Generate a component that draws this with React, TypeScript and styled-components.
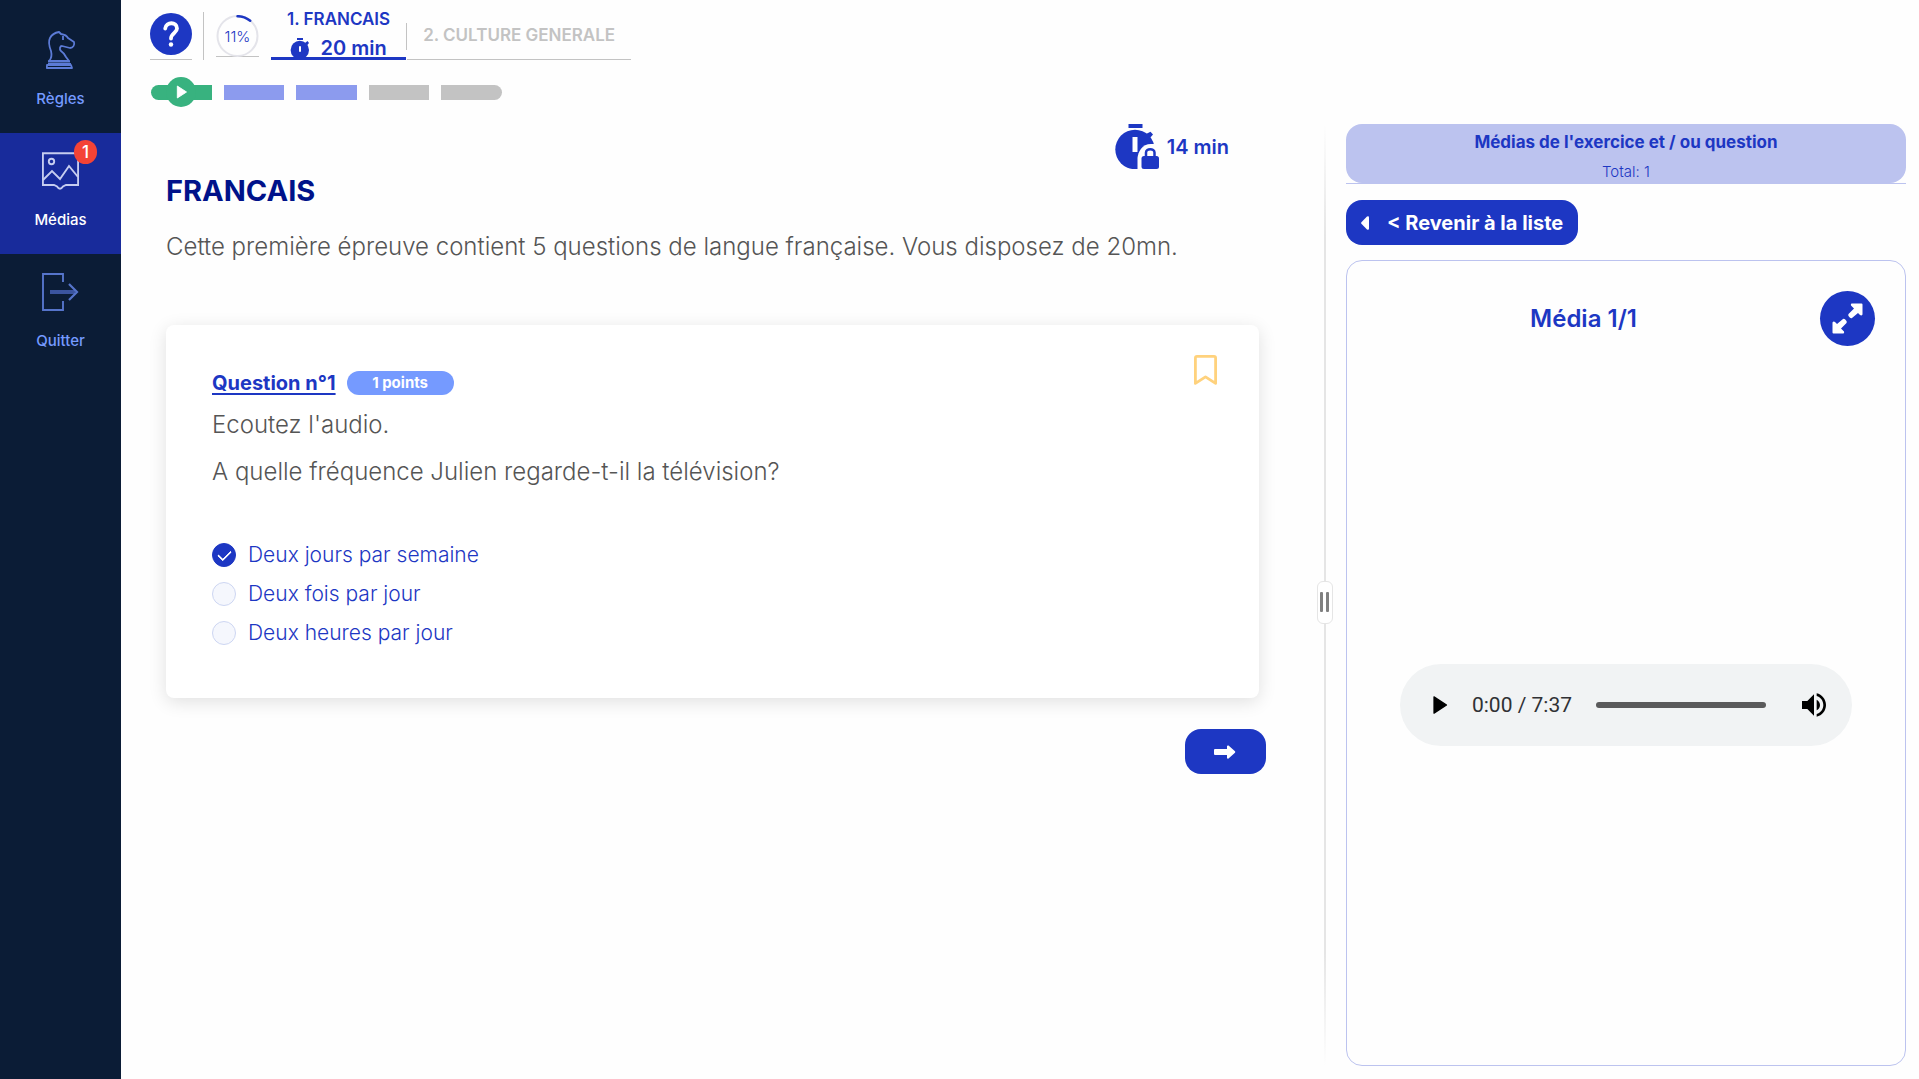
import React, { useState } from "react";
import styled, { createGlobalStyle } from "styled-components";

const blue = "#1d37c3";
const lilac = "#bcc3ef";

const GlobalStyle = createGlobalStyle`
  * { box-sizing: border-box; }
  body {
    margin: 0;
    background: #fefefe;
    color: ${blue};
    font-family: Inter, "Open Sans", sans-serif;
  }
  button { font-family: inherit; cursor: pointer; }
  h1, h2, h3, p, fieldset { margin: 0; padding: 0; border: 0; }
`;

const Page = styled.div`
  display: flex;
  min-height: 100vh;
`;

const Sidebar = styled.nav`
  display: flex;
  flex-direction: column;
  flex: 0 0 121px;
  padding-top: 12px;
  background: #0b1c36;
`;

const SideItem = styled.button<{ $active?: boolean }>`
  display: flex;
  flex-direction: column;
  align-items: center;
  gap: 20px;
  height: 121px;
  padding: 19px 0 0;
  border: 0;
  background: ${(p) => (p.$active ? "#182b9b" : "transparent")};
  color: ${(p) => (p.$active ? "#fff" : "#759aff")};
  font-size: 15px;
  font-weight: 500;
  line-height: 20px;
`;

const IconSlot = styled.span`
  position: relative;
  display: flex;
  height: 38px;
`;

const Badge = styled.span`
  position: absolute;
  top: -12px;
  right: -18px;
  width: 23px;
  height: 24px;
  border-radius: 12px;
  background: #f44336;
  color: #fff;
  font-size: 17px;
  line-height: 24px;
  text-align: center;
`;

const Main = styled.main`
  display: flex;
  flex-direction: column;
  flex: 1;
  min-width: 0;
`;

const TopBar = styled.header`
  display: flex;
  align-items: flex-end;
  height: 60px;
  padding-left: 29px;
`;

const HelpBox = styled.div`
  padding-bottom: 4px;
  border-bottom: 1px solid #c3c3c3;
`;

const RoundButton = styled.button<{ $size: number }>`
  display: flex;
  align-items: center;
  justify-content: center;
  width: ${(p) => p.$size}px;
  height: ${(p) => p.$size}px;
  padding: 0;
  border: 0;
  border-radius: 50%;
  background: ${blue};
`;

const Rule = styled.span<{ $tall?: boolean }>`
  width: 1px;
  height: ${(p) => (p.$tall ? 48 : 27)}px;
  margin: ${(p) => (p.$tall ? "0 12px 0 11px" : "0 0 10px")};
  background: #c3c3c3;
`;

const RingBox = styled.div`
  display: grid;
  height: 42px;
  margin: 0 12px 3px 0;
  place-items: center;
  background: linear-gradient(#c3c3c3, #c3c3c3) bottom / 100% 1px no-repeat;
  font-size: 15px;
  font-weight: 300;

  > * { grid-area: 1 / 1; }
`;

const Tab = styled.button<{ $active?: boolean }>`
  display: flex;
  flex-direction: column;
  align-items: center;
  gap: 9px;
  padding: ${(p) => (p.$active ? "0 16px" : "0 16px 14px")};
  border: 0;
  border-bottom: ${(p) => (p.$active ? `3px solid ${blue}` : "1px solid #c3c3c3")};
  background: none;
  color: ${(p) => (p.$active ? blue : "#c3c3c3")};
  font-size: 17px;
  font-weight: 600;
  line-height: 20px;
  white-space: nowrap;
`;

const TabTime = styled.span`
  display: flex;
  gap: 10px;
  margin-bottom: -1px;
  font-size: 20px;
`;

const Progress = styled.div`
  display: flex;
  align-items: center;
  gap: 12px;
  width: 351px;
  height: 30px;
  margin: 17px 0 17px 30px;
`;

const Segment = styled.div<{ $color: string }>`
  display: flex;
  align-items: center;
  justify-content: center;
  flex: 1;
  height: 15px;
  background: ${(p) => p.$color};

  &:first-child { border-radius: 8px 0 0 8px; }
  &:last-child { border-radius: 0 8px 8px 0; }
`;

const PlayDot = styled.span`
  display: flex;
  align-items: center;
  justify-content: center;
  flex: none;
  width: 30px;
  height: 30px;
  border-radius: 50%;
  background: #38b27f;
`;

const Workspace = styled.div`
  display: grid;
  grid-template-columns: minmax(0, 100fr) 16px minmax(0, 49fr);
  flex: 1;
  padding-bottom: 13px;
`;

const Exercise = styled.section`
  display: flex;
  flex-direction: column;
  padding: 0 51px 0 45px;
`;

const Timer = styled.div`
  display: flex;
  align-items: center;
  align-self: flex-end;
  gap: 7px;
  height: 45px;
  margin-right: 37px;
  font-size: 20px;
  font-weight: 600;
`;

const Title = styled.h1`
  margin-top: 4px;
  color: #00128a;
  font-size: 29px;
  font-weight: 700;
  line-height: 36px;
`;

const Text = styled.p`
  color: #555;
  font-size: 24px;
  font-weight: 300;
  line-height: 36px;
`;

const Intro = styled(Text)`
  margin: 20px 0 60px;
`;

const Card = styled.article`
  display: flex;
  align-items: flex-start;
  margin-right: 7px;
  border-radius: 8px;
  background: #fff;
  box-shadow: 0 4px 18px rgba(0, 0, 0, 0.12);
`;

const CardBody = styled.div`
  flex: 1;
  padding: 46px 0 53px 46px;
`;

const QuestionHead = styled.div`
  display: flex;
  align-items: center;
  gap: 11px;
  margin-bottom: 12px;
`;

const QuestionTitle = styled.h2`
  font-size: 20px;
  font-weight: 700;
  line-height: 24px;
  text-decoration: underline;
  text-decoration-thickness: 2px;
  text-underline-offset: 3px;
`;

const Points = styled.span`
  width: 107px;
  border-radius: 12px;
  background: #759aff;
  color: #fff;
  font-size: 15px;
  font-weight: 700;
  line-height: 24px;
  text-align: center;
`;

const Prompt = styled.div`
  display: grid;
  gap: 11px;
  margin-bottom: 53px;
`;

const Options = styled.fieldset`
  display: grid;
  gap: 15px;
`;

const Option = styled.label`
  display: flex;
  align-items: center;
  gap: 12px;
  font-size: 21px;
  font-weight: 300;
  line-height: 24px;
  cursor: pointer;
`;

const Radio = styled.input`
  appearance: none;
  display: grid;
  place-items: center;
  width: 24px;
  height: 24px;
  margin: 0;
  border: 1px solid #cdd6f2;
  border-radius: 50%;
  background: #f5f7fd;

  &:checked {
    border-color: ${blue};
    background: ${blue};
  }
  &:checked::before {
    content: "";
    width: 11px;
    height: 6px;
    margin-bottom: 3px;
    border: solid #fff;
    border-width: 0 0 2px 2px;
    border-radius: 1px;
    transform: rotate(-45deg);
  }
`;

const BookmarkButton = styled.button`
  display: flex;
  margin: 30px 42px 0 0;
  padding: 0;
  border: 0;
  background: none;
`;

const ActionButton = styled.button`
  display: flex;
  align-items: center;
  height: 45px;
  border: 0;
  border-radius: 16px;
  background: ${blue};
  color: #fff;
  font-size: 20px;
  font-weight: 700;
`;

const NextButton = styled(ActionButton)`
  justify-content: center;
  align-self: flex-end;
  width: 81px;
  margin-top: 31px;
`;

const BackButton = styled(ActionButton)`
  align-self: flex-start;
  gap: 18px;
  margin: 16px 0 15px;
  padding: 0 15px;
`;

const Splitter = styled.div`
  display: flex;
  align-items: center;
  justify-content: center;
  background: linear-gradient(transparent, #e5e5e5 12%, #e5e5e5 88%, transparent) center / 2px 100% no-repeat;
`;

const Handle = styled.span`
  display: flex;
  align-items: center;
  justify-content: center;
  gap: 3px;
  width: 16px;
  height: 43px;
  margin-bottom: -14px;
  border: 1px solid #e5e5e5;
  border-radius: 6px;
  background: #fff;

  &::before, &::after {
    content: "";
    width: 3px;
    height: 20px;
    border-radius: 1px;
    background: #808080;
  }
`;

const MediaPane = styled.aside`
  display: flex;
  flex-direction: column;
  padding: 0 13px;
`;

const MediaHeadLine = styled.header`
  border-bottom: 1px solid ${lilac};
`;

const MediaHead = styled.div`
  display: grid;
  gap: 9px;
  padding: 7px 0 1px;
  border-radius: 16px;
  background: ${lilac};
  text-align: center;
`;

const MediaTitle = styled.h2`
  font-size: 17px;
  font-weight: 700;
  line-height: 22px;
`;

const MediaTotal = styled.p`
  font-size: 15px;
  font-weight: 300;
  line-height: 20px;
`;

const MediaBox = styled.section`
  display: flex;
  flex-direction: column;
  flex: 1;
  border: 1px solid ${lilac};
  border-radius: 16px;
`;

const MediaBar = styled.div`
  display: flex;
  align-items: center;
  padding: 30px 30px 0 0;
`;

const MediaName = styled.h3`
  flex: 1;
  font-size: 24px;
  font-weight: 600;
  line-height: 30px;
  text-align: center;
`;

const MediaStage = styled.div`
  display: flex;
  align-items: center;
  justify-content: center;
  flex: 1;
  padding-bottom: 2px;
`;

const Player = styled.div`
  display: flex;
  align-items: center;
  width: 81%;
  height: 82px;
  padding: 0 22px 0 24px;
  border-radius: 41px;
  background: #f1f3f4;
  color: #303134;
  font-family: Roboto, sans-serif;
  font-size: 21px;
`;

const PlayerButton = styled.button`
  display: flex;
  padding: 0;
  border: 0;
  background: none;
`;

const Clock = styled.span`
  margin: 0 24px 0 18px;
`;

const Seek = styled.input`
  appearance: none;
  flex: 1;
  min-width: 0;
  height: 6px;
  margin: 0 32px 0 0;
  border-radius: 3px;
  background: #5a5a5b;

  &::-webkit-slider-thumb {
    appearance: none;
    width: 1px;
    height: 6px;
  }
`;

const KnightIcon = () => (
  <svg width="30" height="38" viewBox="0 0 30 38" fill="none" stroke="#5c7bd6" strokeWidth="1.8" strokeLinejoin="round">
    <path d="M3 30C6 27 6 24 5 20C3 15 2 11 4 7C6 3 10 1.500 13 1L15 3C18 3.500 21 5 22 7L28 11C29 14 27 17 24 17L16 15C14 15 13 18 15 20C18 22 19 24 20 26L23 30Z" />
    <path d="M17 5V9" />
    <path d="M2 30.500H24M2 33H25M1 34L0.800 37H26L25 34Z" />
  </svg>
);

const PictureIcon = () => (
  <svg width="37" height="38" viewBox="0 0 37 38" fill="none" stroke="#c6cdf0" strokeWidth="1.900">
    <path d="M0.900 1.200H36.100V33H24L21 34.500C19 37.500 17 37.500 15 34.500L12 33H0.900Z" />
    <path d="M1 28L10 19L18 27L27 14L36 25" />
    <circle cx="9.500" cy="9.500" r="2.700" />
  </svg>
);

const ExitIcon = () => (
  <svg width="37" height="38" viewBox="0 0 37 38" fill="none" stroke="#5674cb">
    <path strokeWidth="1.900" d="M21 9V1H1V37H21V28" />
    <path stroke="#3b549f" strokeWidth="4" d="M8 19H33" />
    <path strokeWidth="2.200" d="M27 11L35 19L27 27" />
  </svg>
);

const QuestionIcon = () => (
  <svg width="42" height="42" viewBox="0 0 42 42" fill="none" stroke="#fff" strokeWidth="3.800" strokeLinecap="round" strokeLinejoin="round">
    <path d="M15.200 15.500C16 8.500 27 8.500 27 15.500C27 20 21 20 21 25.500" />
    <circle cx="21" cy="31.500" r="2.200" fill="#fff" stroke="none" />
  </svg>
);

const RingIcon = () => (
  <svg width="43" height="42" viewBox="0 0 43 42" fill="none" strokeWidth="2">
    <circle cx="21.500" cy="21" r="20" stroke="#e4e4ea" />
    <path d="M21.500 1.200A20 20 0 0 1 34.200 5.800" stroke={blue} strokeWidth="2.500" strokeLinecap="round" />
  </svg>
);

const StopwatchIcon = () => (
  <svg width="20" height="20" viewBox="0 0 20 20" fill={blue}>
    <rect x="7" y="0" width="6" height="2" />
    <path d="M15 5L17.500 3L19 5L17 7.500Z" />
    <circle cx="9.800" cy="12" r="9.200" />
    <rect x="9" y="8" width="2" height="6" rx="1" fill="#fff" />
  </svg>
);

const LockedWatchIcon = () => (
  <svg width="45" height="45" viewBox="0 0 45 45" fill={blue}>
    <rect x="13.500" y="0" width="14" height="4" />
    <path d="M31 10L35.500 7.800L38 10.500L34 15Z" />
    <circle cx="20" cy="25.500" r="19.700" />
    <rect x="17.500" y="13" width="5" height="15" fill="#fefefe" />
    <path d="M22.500 46V34C23 28 27 20 36 20L46 20V46Z" fill="#fefefe" />
    <path d="M31 32V28.500C31 24 39.500 24 39.500 28.500V32" fill="none" stroke={blue} strokeWidth="2.500" />
    <rect x="26.500" y="32" width="17.500" height="13" rx="2.500" />
  </svg>
);

const BookmarkIcon = () => (
  <svg width="23" height="30" viewBox="0 0 23 30" fill="none" stroke="#ffd27d" strokeWidth="2.800" strokeLinejoin="round">
    <path d="M1.400 3Q1.400 1.400 3 1.400H20Q21.600 1.400 21.600 3V28.400L11.500 21.800L1.400 28.400Z" />
  </svg>
);

const ArrowIcon = () => (
  <svg width="22" height="14" viewBox="0 0 22 14" fill="#fff">
    <path d="M1 4H13V1Q13.500 0 14.500 0.600L21 6.300Q21.600 7 21 7.700L14.500 13.400Q13.500 14 13 13V10H1Q0 10 0 9V5Q0 4 1 4Z" />
  </svg>
);

const CaretIcon = () => (
  <svg width="8" height="14" viewBox="0 0 8 14" fill="#fff">
    <path d="M0.400 6.200L6 0.500Q8 -0.300 8 1.500V12.500Q8 14.300 6 13.500L0.400 7.800Q-0.200 7 0.400 6.200Z" />
  </svg>
);

const ExpandIcon = () => (
  <svg width="31" height="31" viewBox="0 0 31 31" fill="#fff">
    <path id="corner" d="M19.500 0.500H29.500Q30.500 0.500 30.500 1.500V11.500Q29.500 13 28 12L26 10L20 15Q19 15.500 18 14.800L16.500 13Q16 12 16.500 11L22 5.500L19 2.500Q18.500 1 19.500 0.500Z" />
    <use href="#corner" transform="rotate(180 15.500 15.500)" />
  </svg>
);

const PlayIcon = ({ size, color }: { size: number; color: string }) => (
  <svg width={size} height={size} viewBox="0 0 24 24" fill={color} stroke={color} strokeLinejoin="round">
    <path d="M8 5.500V18.500L18 12Z" />
  </svg>
);

const VolumeIcon = () => (
  <svg width="32" height="32" viewBox="0 0 24 24" fill="#000">
    <path d="M3 9v6h4l5 5V4L7 9H3zm13.500 3c0-1.770-1.020-3.290-2.500-4.030v8.050c1.480-.730 2.500-2.250 2.500-4.020zM14 3.230v2.060c2.890.86 5 3.540 5 6.710s-2.110 5.850-5 6.710v2.060c4.010-.91 7-4.490 7-8.770s-2.990-7.860-7-8.770z" />
  </svg>
);

const answers = ["Deux jours par semaine", "Deux fois par jour", "Deux heures par jour"];

export default function App() {
  const [answer, setAnswer] = useState(0);

  return (
    <Page>
      <GlobalStyle />
      <Sidebar>
        <SideItem>
          <IconSlot><KnightIcon /></IconSlot>
          Règles
        </SideItem>
        <SideItem $active>
          <IconSlot>
            <PictureIcon />
            <Badge>1</Badge>
          </IconSlot>
          Médias
        </SideItem>
        <SideItem>
          <IconSlot><ExitIcon /></IconSlot>
          Quitter
        </SideItem>
      </Sidebar>

      <Main>
        <TopBar>
          <HelpBox>
            <RoundButton $size={42} aria-label="Aide"><QuestionIcon /></RoundButton>
          </HelpBox>
          <Rule $tall />
          <RingBox>
            <RingIcon />
            <span>11%</span>
          </RingBox>
          <Tab $active>
            1. FRANCAIS
            <TabTime><StopwatchIcon />20 min</TabTime>
          </Tab>
          <Rule />
          <Tab>2. CULTURE GENERALE</Tab>
        </TopBar>

        <Progress>
          <Segment $color="#38b27f">
            <PlayDot><PlayIcon size={22} color="#fff" /></PlayDot>
          </Segment>
          <Segment $color="#8c9bee" />
          <Segment $color="#8c9bee" />
          <Segment $color="#c3c3c3" />
          <Segment $color="#c3c3c3" />
        </Progress>

        <Workspace>
          <Exercise>
            <Timer><LockedWatchIcon />14 min</Timer>
            <Title>FRANCAIS</Title>
            <Intro>Cette première épreuve contient 5 questions de langue française. Vous disposez de 20mn.</Intro>
            <Card>
              <CardBody>
                <QuestionHead>
                  <QuestionTitle>Question n°1</QuestionTitle>
                  <Points>1 points</Points>
                </QuestionHead>
                <Prompt>
                  <Text>Ecoutez l'audio.</Text>
                  <Text>A quelle fréquence Julien regarde-t-il la télévision?</Text>
                </Prompt>
                <Options>
                  {answers.map((label, i) => (
                    <Option key={label}>
                      <Radio type="radio" name="answer" checked={answer === i} onChange={() => setAnswer(i)} />
                      {label}
                    </Option>
                  ))}
                </Options>
              </CardBody>
              <BookmarkButton aria-label="Marquer la question"><BookmarkIcon /></BookmarkButton>
            </Card>
            <NextButton aria-label="Question suivante"><ArrowIcon /></NextButton>
          </Exercise>

          <Splitter><Handle /></Splitter>

          <MediaPane>
            <MediaHeadLine>
              <MediaHead>
                <MediaTitle>Médias de l'exercice et / ou question</MediaTitle>
                <MediaTotal>Total: 1</MediaTotal>
              </MediaHead>
            </MediaHeadLine>
            <BackButton><CaretIcon />&lt; Revenir à la liste</BackButton>
            <MediaBox>
              <MediaBar>
                <MediaName>Média 1/1</MediaName>
                <RoundButton $size={55} aria-label="Agrandir"><ExpandIcon /></RoundButton>
              </MediaBar>
              <MediaStage>
                <Player>
                  <PlayerButton aria-label="Lecture"><PlayIcon size={30} color="#000" /></PlayerButton>
                  <Clock>0:00 / 7:37</Clock>
                  <Seek type="range" min={0} max={457} defaultValue={0} aria-label="Position" />
                  <PlayerButton aria-label="Volume"><VolumeIcon /></PlayerButton>
                </Player>
              </MediaStage>
            </MediaBox>
          </MediaPane>
        </Workspace>
      </Main>
    </Page>
  );
}
